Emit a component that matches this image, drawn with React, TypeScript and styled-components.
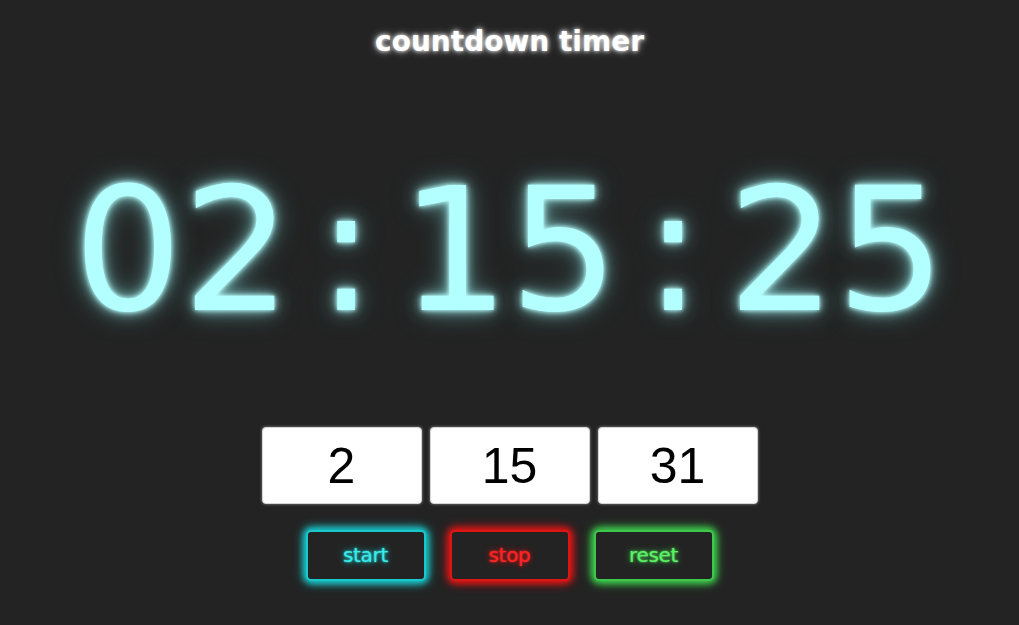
import React from "react";
import styled, { createGlobalStyle } from "styled-components";

const Global = createGlobalStyle`
  html, body { margin: 0; padding: 0; background: #232323; }
  body { font-family: "DejaVu Sans", Verdana, sans-serif; }
`;

const Page = styled.div`
  width: 1019px;
  height: 625px;
  background: #232323;
  display: flex;
  flex-direction: column;
  align-items: center;
  overflow: hidden;
`;

const Title = styled.h1`
  margin: 22px 0 0;
  font-family: "DejaVu Sans", Verdana, sans-serif;
  font-weight: bold;
  font-size: 28px;
  line-height: 40px;
  color: #ffffff;
  text-shadow: 0 0 4px #ffffff, 0 0 8px rgba(255, 255, 255, 0.6);
`;

const Clock = styled.div`
  margin-top: 99px;
  display: flex;
  font-family: "DejaVu Sans", Verdana, sans-serif;
  font-size: 171px;
  line-height: 180px;
  color: #b3ffff;
  text-shadow: 0 0 4px rgba(190, 255, 255, 1), 0 0 10px rgba(170, 250, 250, 0.8),
    0 0 18px rgba(140, 225, 225, 0.6), 0 0 30px rgba(110, 200, 200, 0.4);
  white-space: nowrap;
`;

const Cell = styled.span`
  width: 109px;
  text-align: center;
`;

const Inputs = styled.div`
  margin-top: 86px;
  display: flex;
  gap: 8px;
`;

const Field = styled.input`
  box-sizing: border-box;
  width: 160px;
  height: 77px;
  border: 1px solid #d4d4d4;
  border-radius: 4px;
  background: #ffffff;
  text-align: center;
  font-family: "Liberation Sans", Arial, sans-serif;
  font-size: 50px;
  color: #000;
  box-shadow: 0 0 3px rgba(255, 255, 255, 0.5);
  outline: none;
  padding: 0;
`;

const Buttons = styled.div`
  margin-top: 26px;
  display: flex;
  gap: 24px;
`;

const Btn = styled.button<{ $c: string; $t: string }>`
  box-sizing: border-box;
  width: 120px;
  height: 51px;
  background: #232323;
  border: 2px solid ${(p) => p.$c};
  border-radius: 5px;
  box-shadow: 0 0 6px 2px ${(p) => p.$c}, 0 0 12px 1px ${(p) => p.$c};
  color: ${(p) => p.$t};
  font-family: "DejaVu Sans", Verdana, sans-serif;
  font-size: 20px;
  letter-spacing: -0.3px;
  text-shadow: 0 0 2px ${(p) => p.$t}, 0 0 6px ${(p) => p.$c};
  cursor: pointer;
  padding: 0 0 2px;
`;

const TIME = "02:15:25";

export default function App() {
  return (
    <Page>
      <Global />
      <Title>countdown timer</Title>
      <Clock>
        {TIME.split("").map((ch, i) => (
          <Cell key={i}>{ch}</Cell>
        ))}
      </Clock>
      <Inputs>
        <Field defaultValue="2" />
        <Field defaultValue="15" />
        <Field defaultValue="31" />
      </Inputs>
      <Buttons>
        <Btn $c="#19c8cc" $t="#38eaea">start</Btn>
        <Btn $c="#dd1515" $t="#ff2424">stop</Btn>
        <Btn $c="#3cc84a" $t="#5cf066">reset</Btn>
      </Buttons>
    </Page>
  );
}
